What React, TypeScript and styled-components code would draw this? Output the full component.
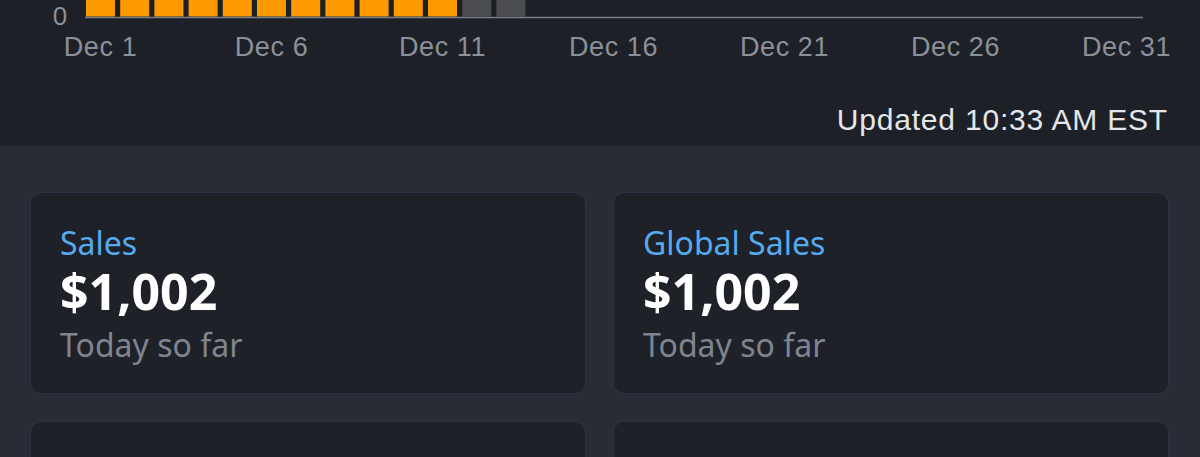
import React from 'react';
import styled, { createGlobalStyle } from 'styled-components';

const GlobalStyle = createGlobalStyle`
  html, body {
    margin: 0;
    padding: 0;
    background: #272c35;
  }
  body {
    font-family: "Noto Sans", "Open Sans", sans-serif;
    overflow: hidden;
  }
`;

const Page = styled.div`
  width: 1200px;
  height: 457px;
  overflow: hidden;
  background: #272c35;
`;

const TopSection = styled.section`
  background: #1d2027;
`;

const ChartSvg = styled.svg`
  display: block;
  width: 1200px;
  height: 70px;
`;

const UpdatedRow = styled.div`
  display: flex;
  justify-content: flex-end;
  padding: 35px 32px 11px;
`;

const UpdatedText = styled.span`
  font-family: "Liberation Sans", Arial, sans-serif;
  font-size: 30px;
  line-height: 30px;
  color: #e4e6e9;
  letter-spacing: 0.8px;
`;

const CardGrid = styled.div`
  display: grid;
  grid-template-columns: 1fr 1fr;
  column-gap: 29px;
  row-gap: 29px;
  padding: 47px 32px 0 31px;
`;

const Card = styled.div`
  height: 200px;
  box-sizing: border-box;
  padding: 30px 29px 0;
  background: #1e2128;
  border-radius: 10px;
  box-shadow: 0 0 0 1px rgba(48, 56, 84, 0.55);
  display: flex;
  flex-direction: column;
`;

const CardTitle = styled.div`
  font-size: 32px;
  line-height: 40px;
  color: #56aaee;
`;

const CardValue = styled.div`
  font-size: 50px;
  line-height: 56px;
  font-weight: 700;
  color: #ffffff;
`;

const CardCaption = styled.div`
  margin-top: 6px;
  font-size: 32px;
  line-height: 40px;
  color: #7f8590;
`;

const BAR_START = 86;
const PITCH = 34.2;
const BAR_W = 29;
const DAYS = 31;
const FILLED = 11;
const PENDING = 2;

const axisFont = '"Liberation Sans", Arial, sans-serif';

const SalesChart = () => {
  const labels = [1, 6, 11, 16, 21, 26, 31];
  return (
    <ChartSvg viewBox="0 0 1200 70">
      {Array.from({ length: FILLED + PENDING }).map((_, i) => (
        <rect
          key={i}
          x={BAR_START + i * PITCH}
          y={0}
          width={BAR_W}
          height={16.5}
          fill={i < FILLED ? '#ff9900' : '#4b4d51'}
        />
      ))}
      <line x1={85} y1={17.5} x2={1143} y2={17.5} stroke="#7a8089" strokeWidth={1.5} />
      <text x={60} y={25} textAnchor="middle" fontFamily={axisFont} fontSize={26} fill="#8c9099">
        0
      </text>
      {labels.map((d) => (
        <text
          key={d}
          x={BAR_START + BAR_W / 2 + (d - 1) * PITCH}
          y={56}
          textAnchor="middle"
          fontFamily={axisFont}
          fontSize={27}
          letterSpacing={0.6}
          fill="#8c9099"
        >
          {`Dec ${d}`}
        </text>
      ))}
    </ChartSvg>
  );
};

const cards = [
  { title: 'Sales', value: '$1,002', caption: 'Today so far' },
  { title: 'Global Sales', value: '$1,002', caption: 'Today so far' },
  { title: '', value: '', caption: '' },
  { title: '', value: '', caption: '' },
];

export default function App() {
  return (
    <Page>
      <GlobalStyle />
      <TopSection>
        <SalesChart />
        <UpdatedRow>
          <UpdatedText>Updated 10:33 AM EST</UpdatedText>
        </UpdatedRow>
      </TopSection>
      <CardGrid>
        {cards.map((c, i) => (
          <Card key={i}>
            {c.title && <CardTitle>{c.title}</CardTitle>}
            {c.value && <CardValue>{c.value}</CardValue>}
            {c.caption && <CardCaption>{c.caption}</CardCaption>}
          </Card>
        ))}
      </CardGrid>
    </Page>
  );
}
